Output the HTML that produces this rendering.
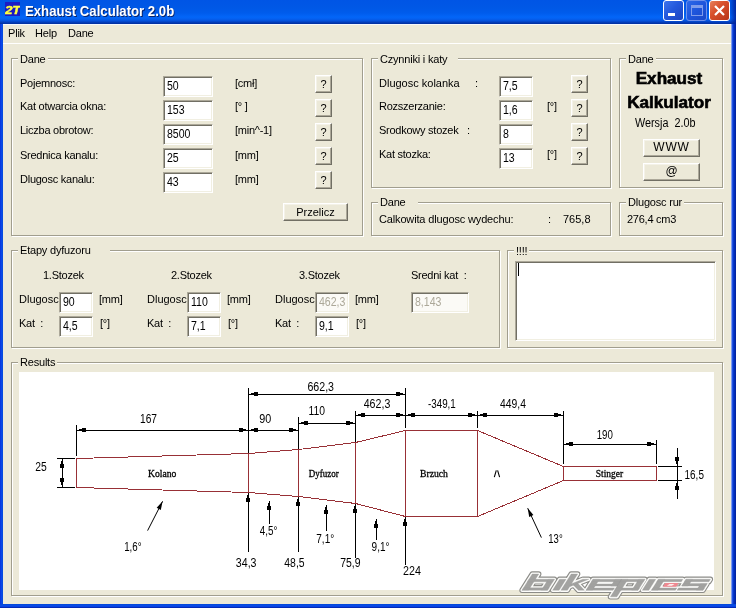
<!DOCTYPE html>
<html>
<head>
<meta charset="utf-8">
<title>Exhaust Calculator 2.0b</title>
<style>
*{box-sizing:border-box;margin:0;padding:0}
html,body{width:736px;height:608px;overflow:hidden;background:#ECE9D8}
body{font-family:"Liberation Sans",sans-serif;font-size:11px;color:#000;position:relative}
.abs{position:absolute}
#win{position:absolute;left:0;top:0;width:736px;height:608px;background:#ECE9D8;overflow:hidden}
#tx{position:absolute;left:0;top:0;width:736px;height:608px;will-change:transform}
#title{position:absolute;left:0;top:0;width:736px;height:24px;
 background:linear-gradient(to bottom,#0055E5 0px,#0058E6 8px,#005CEC 13px,#0366F8 17px,#0560F0 19px,#0450D8 21px,#0340C0 22px,#002D9C 24px)}
#title .t{position:absolute;left:25px;top:2px;font-size:14px;font-weight:bold;color:#fff;
 text-shadow:1px 1px 0 #0A246A;white-space:nowrap;line-height:18px;transform:scaleX(.94);transform-origin:0 0}
#bl{position:absolute;left:0;top:24px;width:3px;height:584px;background:linear-gradient(to right,#0831D9 0,#0845E8 40%,#0A4FE6 75%,#0042D0 100%)}
#br{position:absolute;left:731px;top:24px;width:5px;height:584px;background:linear-gradient(to right,#C8D4F0 0,#3A66E8 1px,#0B3FD8 2px,#0430C0 3px,#00209A 5px)}
#bb{position:absolute;left:0;top:604px;width:736px;height:4px;background:linear-gradient(to bottom,#0042D0 0,#0A4FE6 25%,#0845E8 60%,#001EA0 100%)}
#menu{position:absolute;left:3px;top:24px;width:728px;height:19px;background:#ECE9D8;border-top:1px solid #F6F8FC}
#menu span{position:absolute;top:1px;letter-spacing:-0.2px;line-height:14px;font-size:11px}
#msep{position:absolute;left:3px;top:43px;width:729px;height:1px;background:#fff}
.gb{position:absolute;border:1px solid #A19E8E;box-shadow:1px 1px 0 #fff, inset 1px 1px 0 #fff}
.lg{position:absolute;background:#ECE9D8;padding:0 2px 0 2px;line-height:13px;white-space:nowrap;letter-spacing:-0.2px}
.lb{position:absolute;white-space:nowrap;line-height:13px;letter-spacing:-0.25px}
.ed{position:absolute;background:#fff;border:1px solid;border-color:#ACA899 #fff #fff #ACA899;
 box-shadow:inset 1px 1px 0 #716F64, inset -1px -1px 0 #F1EFE2;font-size:12px;line-height:13px;padding:3px 0 0 3px;white-space:nowrap;overflow:hidden}
.ed span{display:inline-block;transform:scaleX(.88);transform-origin:0 0}
.ed.dis{background:#FBFAF6;color:#ACA899}
.bt{position:absolute;background:#ECE9D8;border:1px solid;border-color:#fff #716F64 #716F64 #fff;
 box-shadow:inset -1px -1px 0 #ACA899, inset 1px 1px 0 #F4F2E8;text-align:center;font-size:11px;line-height:13px;white-space:nowrap}
.bt.q{width:17px;height:18px;padding-top:2px}
.hd{position:absolute;text-align:center;font-weight:bold;font-size:16px;line-height:20px;white-space:nowrap;-webkit-text-stroke:0.6px #000;transform:scaleX(1.07);transform-origin:50% 50%}
.ico{position:absolute;left:5px;top:2px;width:15px;height:14px;background:#1B1BC4;overflow:hidden}
.ico i{position:absolute;left:0px;top:1px;font-size:10.8px;line-height:14px;font-weight:bold;font-style:italic;color:#FFFF40;letter-spacing:-0.3px;-webkit-text-stroke:0.4px #FFFF40;transform:scaleX(1.25);transform-origin:0 0}
.wb{position:absolute;top:0px;width:21px;height:21px;border:1px solid #fff;border-radius:3px;background:linear-gradient(135deg,#3D74EC 0%,#2458DC 45%,#1C44C0 100%);overflow:hidden}
.wb.dim{border-color:#6F90EA;background:linear-gradient(135deg,#2D68E8 0%,#1E55DC 50%,#1A48C8 100%)}
.wb.cl{background:linear-gradient(135deg,#E8805C 0%,#D8502C 40%,#B83418 100%)}
</style>
</head>
<body>
<div id="win">
<div id="tx">
 <div id="title"><div style="position:absolute;left:730px;top:0;width:6px;height:24px;background:linear-gradient(to right,rgba(0,32,154,0),rgba(0,32,154,.9))"></div><div class="ico"><i>2T</i></div><div class="t">Exhaust Calculator 2.0b</div>
  <div class="wb" style="left:663px"><div style="position:absolute;left:4px;top:12px;width:7px;height:3px;background:#fff"></div></div>
  <div class="wb dim" style="left:686px"><div style="position:absolute;left:4px;top:4px;width:12px;height:11px;border:1px solid #7F9CEB;border-top-width:3px"></div></div>
  <div class="wb cl" style="left:709px"><svg width="19" height="19" style="position:absolute;left:0;top:0"><path d="M5 5 L14 14 M14 5 L5 14" stroke="#fff" stroke-width="2.2" stroke-linecap="butt" fill="none"/></svg></div>
 </div>
 <div id="menu"><span style="left:5px">Plik</span><span style="left:32px">Help</span><span style="left:65px">Dane</span></div>
 <div id="msep"></div>
 <div id="bl"></div><div id="br"></div><div id="bb"></div>

 <!-- group 1 : Dane -->
 <div class="gb" style="left:11px;top:58px;width:352px;height:178px"></div>
 <div class="lg" style="left:18px;top:53px">Dane</div>
 <div class="lb" style="left:20px;top:77px">Pojemnosc:</div>
 <div class="lb" style="left:20px;top:100px">Kat otwarcia okna:</div>
 <div class="lb" style="left:20px;top:124px">Liczba obrotow:</div>
 <div class="lb" style="left:20px;top:149px">Srednica kanalu:</div>
 <div class="lb" style="left:20px;top:173px">Dlugosc kanalu:</div>
 <div class="ed" style="left:163px;top:76px;width:50px;height:21px"><span>50</span></div>
 <div class="ed" style="left:163px;top:100px;width:50px;height:21px"><span>153</span></div>
 <div class="ed" style="left:163px;top:124px;width:50px;height:21px"><span>8500</span></div>
 <div class="ed" style="left:163px;top:148px;width:50px;height:21px"><span>25</span></div>
 <div class="ed" style="left:163px;top:172px;width:50px;height:21px"><span>43</span></div>
 <div class="lb" style="left:235px;top:77px">[cm&#322;]</div>
 <div class="lb" style="left:235px;top:100px">[&deg; ]</div>
 <div class="lb" style="left:235px;top:124px">[min^-1]</div>
 <div class="lb" style="left:235px;top:149px">[mm]</div>
 <div class="lb" style="left:235px;top:173px">[mm]</div>
 <div class="bt q" style="left:315px;top:75px">?</div>
 <div class="bt q" style="left:315px;top:99px">?</div>
 <div class="bt q" style="left:315px;top:123px">?</div>
 <div class="bt q" style="left:315px;top:147px">?</div>
 <div class="bt q" style="left:315px;top:171px">?</div>
 <div class="bt" style="left:283px;top:203px;width:65px;height:18px;padding-top:2px">Przelicz</div>

 <!-- group 2 : Czynniki i katy -->
 <div class="gb" style="left:371px;top:58px;width:240px;height:130px"></div>
 <div class="lg" style="left:378px;top:53px;padding-right:11px">Czynniki i katy</div>
 <div class="lb" style="left:379px;top:77px;letter-spacing:0">Dlugosc kolanka</div>
 <div class="lb" style="left:475px;top:77px">:</div>
 <div class="lb" style="left:379px;top:100px">Rozszerzanie:</div>
 <div class="lb" style="left:379px;top:124px">Srodkowy stozek</div>
 <div class="lb" style="left:467px;top:124px">:</div>
 <div class="lb" style="left:379px;top:148px">Kat stozka:</div>
 <div class="ed" style="left:499px;top:76px;width:34px;height:21px"><span>7,5</span></div>
 <div class="ed" style="left:499px;top:100px;width:34px;height:21px"><span>1,6</span></div>
 <div class="ed" style="left:499px;top:124px;width:34px;height:21px"><span>8</span></div>
 <div class="ed" style="left:499px;top:148px;width:34px;height:21px"><span>13</span></div>
 <div class="lb" style="left:547px;top:100px">[&deg;]</div>
 <div class="lb" style="left:547px;top:148px">[&deg;]</div>
 <div class="bt q" style="left:571px;top:75px">?</div>
 <div class="bt q" style="left:571px;top:99px">?</div>
 <div class="bt q" style="left:571px;top:123px">?</div>
 <div class="bt q" style="left:571px;top:147px">?</div>

 <!-- group 3 : Dane (right) -->
 <div class="gb" style="left:619px;top:58px;width:104px;height:130px"></div>
 <div class="lg" style="left:626px;top:53px">Dane</div>
 <div class="hd" style="left:619px;top:69px;width:100px">Exhaust</div>
 <div class="hd" style="left:619px;top:93px;width:100px">Kalkulator</div>
 <div class="lb" style="left:635px;top:117px;font-size:12px;letter-spacing:0;transform:scaleX(.9);transform-origin:0 0">Wersja&nbsp; 2.0b</div>
 <div class="bt" style="left:643px;top:139px;width:57px;height:18px;padding-top:1px;font-size:12px;letter-spacing:0.8px">WWW</div>
 <div class="bt" style="left:643px;top:163px;width:57px;height:18px;padding-top:1px;font-size:12px">@</div>

 <!-- group 4 : Dane (middle) -->
 <div class="gb" style="left:371px;top:202px;width:240px;height:34px"></div>
 <div class="lg" style="left:378px;top:196px;padding-right:12px">Dane</div>
 <div class="lb" style="left:379px;top:213px;letter-spacing:-0.15px">Calkowita dlugosc wydechu:</div>
 <div class="lb" style="left:548px;top:213px">:</div>
 <div class="lb" style="left:563px;top:213px;letter-spacing:0">765,8</div>

 <!-- group 5 : Dlugosc rur -->
 <div class="gb" style="left:619px;top:202px;width:104px;height:34px"></div>
 <div class="lg" style="left:626px;top:196px">Dlugosc rur</div>
 <div class="lb" style="left:627px;top:213px">276,4 cm3</div>

 <!-- group 6 : Etapy dyfuzoru -->
 <div class="gb" style="left:11px;top:250px;width:489px;height:98px"></div>
 <div class="lg" style="left:18px;top:244px;padding-right:19px">Etapy dyfuzoru</div>
 <div class="lb" style="left:43px;top:269px">1.Stozek</div>
 <div class="lb" style="left:171px;top:269px">2.Stozek</div>
 <div class="lb" style="left:299px;top:269px">3.Stozek</div>
 <div class="lb" style="left:411px;top:269px">Sredni kat&nbsp; :</div>
 <div class="lb" style="left:19px;top:293px;letter-spacing:0">Dlugosc</div>
 <div class="lb" style="left:147px;top:293px;letter-spacing:0">Dlugosc</div>
 <div class="lb" style="left:275px;top:293px;letter-spacing:0">Dlugosc</div>
 <div class="lb" style="left:19px;top:317px">Kat&nbsp; :</div>
 <div class="lb" style="left:147px;top:317px">Kat&nbsp; :</div>
 <div class="lb" style="left:275px;top:317px">Kat&nbsp; :</div>
 <div class="ed" style="left:59px;top:292px;width:34px;height:21px"><span>90</span></div>
 <div class="ed" style="left:187px;top:292px;width:34px;height:21px"><span>110</span></div>
 <div class="ed dis" style="left:315px;top:292px;width:34px;height:21px"><span>462,3</span></div>
 <div class="ed dis" style="left:411px;top:292px;width:58px;height:21px"><span>8,143</span></div>
 <div class="ed" style="left:59px;top:316px;width:34px;height:21px"><span>4,5</span></div>
 <div class="ed" style="left:187px;top:316px;width:34px;height:21px"><span>7,1</span></div>
 <div class="ed" style="left:315px;top:316px;width:34px;height:21px"><span>9,1</span></div>
 <div class="lb" style="left:99px;top:293px">[mm]</div>
 <div class="lb" style="left:227px;top:293px">[mm]</div>
 <div class="lb" style="left:355px;top:293px">[mm]</div>
 <div class="lb" style="left:100px;top:317px">[&deg;]</div>
 <div class="lb" style="left:228px;top:317px">[&deg;]</div>
 <div class="lb" style="left:356px;top:317px">[&deg;]</div>

 <!-- group 7 : !!!! -->
 <div class="gb" style="left:507px;top:250px;width:216px;height:98px"></div>
 <div class="lg" style="left:514px;top:245px">!!!!</div>
 <div class="ed" style="left:515px;top:261px;width:201px;height:80px"><div style="position:absolute;left:2px;top:1px;width:1px;height:13px;background:#000"></div></div>

 <!-- group 8 : Results -->
 <div class="gb" style="left:11px;top:362px;width:712px;height:234px"></div>
 <div class="lg" style="left:18px;top:356px">Results</div>
 <div id="cv" style="position:absolute;left:19px;top:372px;width:695px;height:218px;background:#fff"></div>
<!--DG-->
<svg id="dg" width="736" height="608" viewBox="0 0 736 608" style="position:absolute;left:0;top:0" shape-rendering="crispEdges" stroke-width="1">
<polygon points="76.5,458.5 248.5,453.5 298.5,449.5 355.5,442.5 405.5,430.5 477.5,430.5 563.5,466.5 656.5,466.5 656.5,480.5 563.5,480.5 477.5,516.5 405.5,516.5 355.5,503.5 298.5,496.5 248.5,492.5 76.5,487.5" fill="none" stroke="#983036"/>
<rect x="248" y="453" width="1" height="40" fill="#983036"/>
<rect x="298" y="449" width="1" height="48" fill="#983036"/>
<rect x="355" y="442" width="1" height="62" fill="#983036"/>
<rect x="405" y="430" width="1" height="87" fill="#983036"/>
<rect x="477" y="430" width="1" height="87" fill="#983036"/>
<rect x="563" y="466" width="1" height="15" fill="#983036"/>
<rect x="76" y="425" width="1" height="31" fill="#000"/>
<rect x="248" y="388" width="1" height="65" fill="#000"/>
<rect x="298" y="417" width="1" height="32" fill="#000"/>
<rect x="355" y="411" width="1" height="31" fill="#000"/>
<rect x="405" y="388" width="1" height="40" fill="#000"/>
<rect x="477" y="411" width="1" height="17" fill="#000"/>
<rect x="563" y="411" width="1" height="53" fill="#000"/>
<rect x="656" y="440" width="1" height="24" fill="#000"/>
<rect x="76" y="430" width="223" height="1" fill="#000"/>
<rect x="248" y="394" width="158" height="1" fill="#000"/>
<rect x="298" y="423" width="58" height="1" fill="#000"/>
<rect x="355" y="415" width="209" height="1" fill="#000"/>
<rect x="563" y="444" width="94" height="1" fill="#000"/>
<rect x="79" y="429" width="3" height="2" fill="#000"/>
<rect x="82" y="428" width="4" height="4" fill="#000"/>
<rect x="243" y="429" width="3" height="2" fill="#000"/>
<rect x="239" y="428" width="4" height="4" fill="#000"/>
<rect x="251" y="429" width="3" height="2" fill="#000"/>
<rect x="254" y="428" width="4" height="4" fill="#000"/>
<rect x="293" y="429" width="3" height="2" fill="#000"/>
<rect x="289" y="428" width="4" height="4" fill="#000"/>
<rect x="251" y="393" width="3" height="2" fill="#000"/>
<rect x="254" y="392" width="4" height="4" fill="#000"/>
<rect x="400" y="393" width="3" height="2" fill="#000"/>
<rect x="396" y="392" width="4" height="4" fill="#000"/>
<rect x="301" y="422" width="3" height="2" fill="#000"/>
<rect x="304" y="421" width="4" height="4" fill="#000"/>
<rect x="350" y="422" width="3" height="2" fill="#000"/>
<rect x="346" y="421" width="4" height="4" fill="#000"/>
<rect x="358" y="414" width="3" height="2" fill="#000"/>
<rect x="361" y="413" width="4" height="4" fill="#000"/>
<rect x="400" y="414" width="3" height="2" fill="#000"/>
<rect x="396" y="413" width="4" height="4" fill="#000"/>
<rect x="408" y="414" width="3" height="2" fill="#000"/>
<rect x="411" y="413" width="4" height="4" fill="#000"/>
<rect x="472" y="414" width="3" height="2" fill="#000"/>
<rect x="468" y="413" width="4" height="4" fill="#000"/>
<rect x="480" y="414" width="3" height="2" fill="#000"/>
<rect x="483" y="413" width="4" height="4" fill="#000"/>
<rect x="558" y="414" width="3" height="2" fill="#000"/>
<rect x="554" y="413" width="4" height="4" fill="#000"/>
<rect x="566" y="443" width="3" height="2" fill="#000"/>
<rect x="569" y="442" width="4" height="4" fill="#000"/>
<rect x="651" y="443" width="3" height="2" fill="#000"/>
<rect x="647" y="442" width="4" height="4" fill="#000"/>
<rect x="57" y="458" width="18" height="1" fill="#000"/>
<rect x="57" y="487" width="18" height="1" fill="#000"/>
<rect x="62" y="458" width="1" height="30" fill="#000"/>
<rect x="61" y="461" width="2" height="3" fill="#000"/>
<rect x="60" y="464" width="4" height="4" fill="#000"/>
<rect x="61" y="482" width="2" height="3" fill="#000"/>
<rect x="60" y="478" width="4" height="4" fill="#000"/>
<rect x="658" y="466" width="24" height="1" fill="#000"/>
<rect x="658" y="480" width="24" height="1" fill="#000"/>
<rect x="677" y="448" width="1" height="51" fill="#000"/>
<rect x="676" y="461" width="2" height="3" fill="#000"/>
<rect x="675" y="457" width="4" height="4" fill="#000"/>
<rect x="676" y="483" width="2" height="3" fill="#000"/>
<rect x="675" y="486" width="4" height="4" fill="#000"/>
<rect x="248" y="493" width="1" height="59" fill="#000"/>
<rect x="247" y="495" width="2" height="3" fill="#000"/>
<rect x="246" y="498" width="4" height="4" fill="#000"/>
<rect x="298" y="497" width="1" height="55" fill="#000"/>
<rect x="297" y="499" width="2" height="3" fill="#000"/>
<rect x="296" y="502" width="4" height="4" fill="#000"/>
<rect x="355" y="504" width="1" height="54" fill="#000"/>
<rect x="354" y="506" width="2" height="3" fill="#000"/>
<rect x="353" y="509" width="4" height="4" fill="#000"/>
<rect x="405" y="517" width="1" height="48" fill="#000"/>
<rect x="404" y="519" width="2" height="3" fill="#000"/>
<rect x="403" y="522" width="4" height="4" fill="#000"/>
<rect x="269" y="501" width="1" height="23" fill="#000"/>
<rect x="268" y="503" width="2" height="3" fill="#000"/>
<rect x="267" y="506" width="4" height="4" fill="#000"/>
<rect x="326" y="505" width="1" height="26" fill="#000"/>
<rect x="325" y="507" width="2" height="3" fill="#000"/>
<rect x="324" y="510" width="4" height="4" fill="#000"/>
<rect x="376" y="519" width="1" height="21" fill="#000"/>
<rect x="375" y="521" width="2" height="3" fill="#000"/>
<rect x="374" y="524" width="4" height="4" fill="#000"/>
<line x1="147.6" y1="530.6" x2="162.6" y2="501.3" stroke="#000" shape-rendering="auto"/>
<polygon points="162.6,501.3 156.7,507.8 160.8,509.9" fill="#000" shape-rendering="auto"/>
<line x1="541.4" y1="537.6" x2="527.7" y2="508.2" stroke="#000" shape-rendering="auto"/>
<polygon points="527.7,508.2 529.2,516.9 533.4,514.9" fill="#000" shape-rendering="auto"/>
<text x="140" y="422.5" font-size="12" font-family="Liberation Sans" textLength="17.0" lengthAdjust="spacingAndGlyphs">167</text>
<text x="307.4" y="391.2" font-size="12" font-family="Liberation Sans" textLength="26.6" lengthAdjust="spacingAndGlyphs">662,3</text>
<text x="259.3" y="423" font-size="12" font-family="Liberation Sans" textLength="12.0" lengthAdjust="spacingAndGlyphs">90</text>
<text x="308.5" y="414.8" font-size="12" font-family="Liberation Sans" textLength="16.5" lengthAdjust="spacingAndGlyphs">110</text>
<text x="363.7" y="407.5" font-size="12" font-family="Liberation Sans" textLength="26.6" lengthAdjust="spacingAndGlyphs">462,3</text>
<text x="428" y="407.5" font-size="12" font-family="Liberation Sans" textLength="27.8" lengthAdjust="spacingAndGlyphs">-349,1</text>
<text x="500" y="407.5" font-size="12" font-family="Liberation Sans" textLength="25.9" lengthAdjust="spacingAndGlyphs">449,4</text>
<text x="596.7" y="438.8" font-size="12" font-family="Liberation Sans" textLength="16.2" lengthAdjust="spacingAndGlyphs">190</text>
<text x="35.3" y="470.5" font-size="12" font-family="Liberation Sans" textLength="11.5" lengthAdjust="spacingAndGlyphs">25</text>
<text x="684.6" y="478.7" font-size="12" font-family="Liberation Sans" textLength="19.3" lengthAdjust="spacingAndGlyphs">16,5</text>
<text x="124.2" y="550.6" font-size="12" font-family="Liberation Sans" textLength="17.4" lengthAdjust="spacingAndGlyphs">1,6&#176;</text>
<text x="235.8" y="567.2" font-size="12" font-family="Liberation Sans" textLength="20.7" lengthAdjust="spacingAndGlyphs">34,3</text>
<text x="284.3" y="567.2" font-size="12" font-family="Liberation Sans" textLength="20.3" lengthAdjust="spacingAndGlyphs">48,5</text>
<text x="340.2" y="567.2" font-size="12" font-family="Liberation Sans" textLength="20.3" lengthAdjust="spacingAndGlyphs">75,9</text>
<text x="403" y="575.2" font-size="12" font-family="Liberation Sans" textLength="17.9" lengthAdjust="spacingAndGlyphs">224</text>
<text x="259.8" y="535.2" font-size="12" font-family="Liberation Sans" textLength="17.6" lengthAdjust="spacingAndGlyphs">4,5&#176;</text>
<text x="316.3" y="543.2" font-size="12" font-family="Liberation Sans" textLength="17.9" lengthAdjust="spacingAndGlyphs">7,1&#176;</text>
<text x="371.6" y="551.3" font-size="12" font-family="Liberation Sans" textLength="17.9" lengthAdjust="spacingAndGlyphs">9,1&#176;</text>
<text x="548.3" y="543.2" font-size="12" font-family="Liberation Sans" textLength="14.4" lengthAdjust="spacingAndGlyphs">13&#176;</text>
<text x="148.1" y="476.9" font-size="10" font-family="Liberation Serif" textLength="28.3" lengthAdjust="spacingAndGlyphs" stroke="#000" stroke-width="0.3">Kolano</text>
<text x="308.8" y="476.9" font-size="10" font-family="Liberation Serif" textLength="29.9" lengthAdjust="spacingAndGlyphs" stroke="#000" stroke-width="0.3">Dyfuzor</text>
<text x="420" y="476.9" font-size="10" font-family="Liberation Serif" textLength="27.9" lengthAdjust="spacingAndGlyphs" stroke="#000" stroke-width="0.3">Brzuch</text>
<text x="595.8" y="476.9" font-size="10" font-family="Liberation Serif" textLength="27.4" lengthAdjust="spacingAndGlyphs" stroke="#000" stroke-width="0.3">Stinger</text>
<path d="M494.3 477.2L496.3 470.3M497.6 470.3L499.6 477.2" stroke="#000" stroke-width="1.1" fill="none" shape-rendering="auto"/>
</svg>
<!--/DG-->
<!--WM-->
<svg id="wm" width="736" height="608" viewBox="0 0 736 608" style="position:absolute;left:0;top:0" shape-rendering="geometricPrecision">
<g transform="translate(522.0,590.3) skewX(-32.2)" stroke-linejoin="round">
<path d="M0.0 -16.3H6.5V0H0.0Z M0.0 -11H25.5V-8.5H0.0Z M0.0 -2.5H25.5V0H0.0Z M19.3 -11H25.5V0H19.3Z M30.6 -11H37.1V0H30.6Z M38.9 -16.3H45.4V0H38.9Z M45.4 -3.6 L45.4 -6.6 L53.9 -11 L59.9 -11Z M47.9 -5.4 L51.4 -7.0 L62.4 0 L56.4 0Z M64.0 -11H70.5V0H64.0Z M64.0 -11H92.5V-8.6H64.0Z M64.0 -6.4H92.5V-4.2H64.0Z M64.0 -2.4H91.0V0H64.0Z M86.3 -11H92.5V-4.2H86.3Z M92.5 -11H99.0V6.5H92.5Z M92.5 -11H116.0V-8.6H92.5Z M92.5 -2.4H116.0V0H92.5Z M109.8 -11H116.0V0H109.8Z M120.3 -11H126.8V0H120.3Z M129.4 -11H135.9V0H129.4Z M129.4 -11H153.9V-8.6H129.4Z M129.4 -2.4H153.4V0H129.4Z M157.0 -11H181.5V-8.6H157.0Z M157.0 -11H163.5V-4.3H157.0Z M157.0 -6.7H181.0V-4.3H157.0Z M174.5 -6.7H181.0V0H174.5Z M155.0 -2.4H181.0V0H155.0Z" fill="#8C8C88" stroke="#8C8C88" stroke-width="5.4" vector-effect="non-scaling-stroke"/>
<path d="M0.0 -16.3H6.5V0H0.0Z M0.0 -11H25.5V-8.5H0.0Z M0.0 -2.5H25.5V0H0.0Z M19.3 -11H25.5V0H19.3Z M30.6 -11H37.1V0H30.6Z M38.9 -16.3H45.4V0H38.9Z M45.4 -3.6 L45.4 -6.6 L53.9 -11 L59.9 -11Z M47.9 -5.4 L51.4 -7.0 L62.4 0 L56.4 0Z M64.0 -11H70.5V0H64.0Z M64.0 -11H92.5V-8.6H64.0Z M64.0 -6.4H92.5V-4.2H64.0Z M64.0 -2.4H91.0V0H64.0Z M86.3 -11H92.5V-4.2H86.3Z M92.5 -11H99.0V6.5H92.5Z M92.5 -11H116.0V-8.6H92.5Z M92.5 -2.4H116.0V0H92.5Z M109.8 -11H116.0V0H109.8Z M120.3 -11H126.8V0H120.3Z M129.4 -11H135.9V0H129.4Z M129.4 -11H153.9V-8.6H129.4Z M129.4 -2.4H153.4V0H129.4Z M157.0 -11H181.5V-8.6H157.0Z M157.0 -11H163.5V-4.3H157.0Z M157.0 -6.7H181.0V-4.3H157.0Z M174.5 -6.7H181.0V0H174.5Z M155.0 -2.4H181.0V0H155.0Z" fill="#FCFCFA" stroke="#FCFCFA" stroke-width="3.2" vector-effect="non-scaling-stroke"/>
<path d="M0.0 -16.3H6.5V0H0.0Z M0.0 -11H25.5V-8.5H0.0Z M0.0 -2.5H25.5V0H0.0Z M19.3 -11H25.5V0H19.3Z M30.6 -11H37.1V0H30.6Z M38.9 -16.3H45.4V0H38.9Z M45.4 -3.6 L45.4 -6.6 L53.9 -11 L59.9 -11Z M47.9 -5.4 L51.4 -7.0 L62.4 0 L56.4 0Z M64.0 -11H70.5V0H64.0Z M64.0 -11H92.5V-8.6H64.0Z M64.0 -6.4H92.5V-4.2H64.0Z M64.0 -2.4H91.0V0H64.0Z M86.3 -11H92.5V-4.2H86.3Z M92.5 -11H99.0V6.5H92.5Z M92.5 -11H116.0V-8.6H92.5Z M92.5 -2.4H116.0V0H92.5Z M109.8 -11H116.0V0H109.8Z M120.3 -11H126.8V0H120.3Z M129.4 -11H135.9V0H129.4Z M129.4 -11H153.9V-8.6H129.4Z M129.4 -2.4H153.4V0H129.4Z M157.0 -11H181.5V-8.6H157.0Z M157.0 -11H163.5V-4.3H157.0Z M157.0 -6.7H181.0V-4.3H157.0Z M174.5 -6.7H181.0V0H174.5Z M155.0 -2.4H181.0V0H155.0Z" fill="#A3A3A1" stroke="#9A9A98" stroke-width="0.3" vector-effect="non-scaling-stroke"/>
<path d="M138.5 -7.4H152V-3.6H138.5Z" fill="#EE8890"/>
<path d="M143.5 -6.4H148.5L147 -4.6H142Z" fill="#FCEDED"/>
</g>
</svg>
<!--/WM-->
</div>
</div>
</body>
</html>
